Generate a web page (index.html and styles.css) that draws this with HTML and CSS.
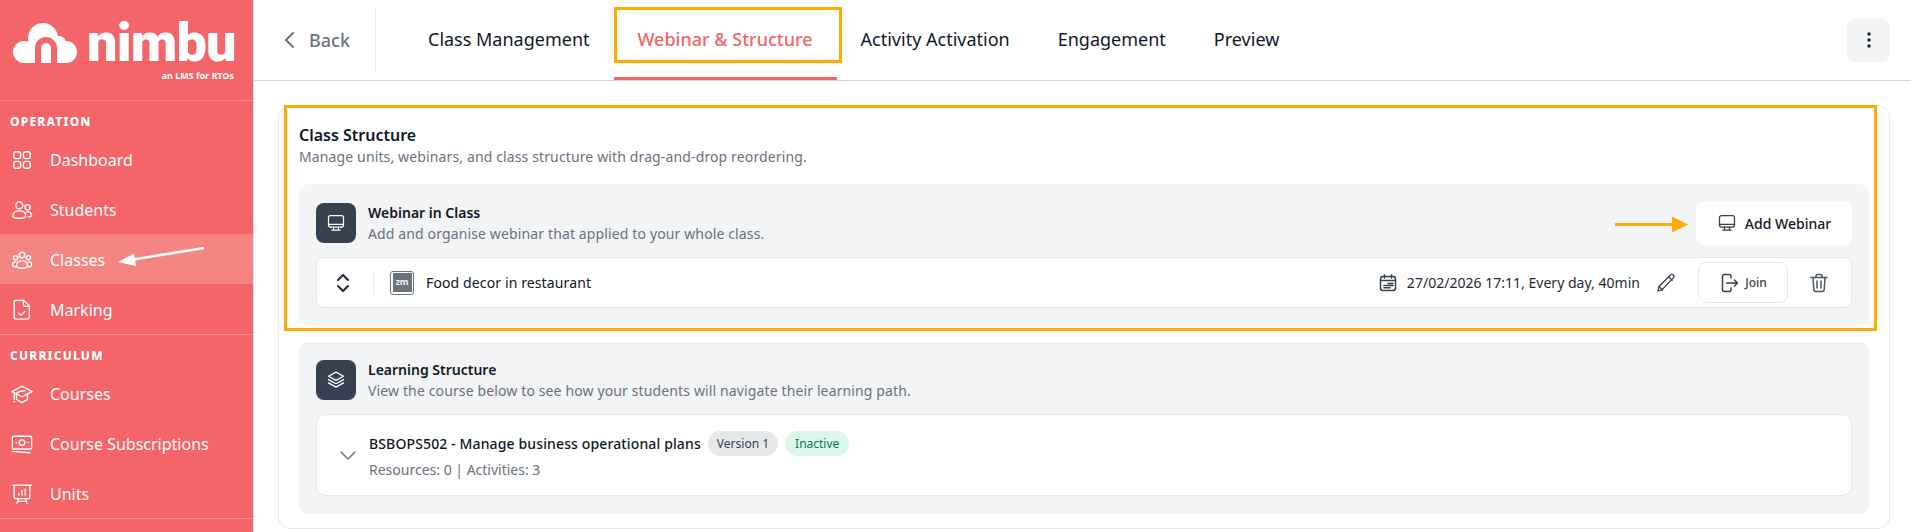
FILE: index.html
```html
<!DOCTYPE html>
<html lang="en">
<head>
<meta charset="utf-8">
<title>Class Structure</title>
<link rel="stylesheet" href="styles.css">
</head>
<body>
<div class="app">
  <aside class="sidebar">
    <div class="logo">
      <div class="logo-main">
        <svg class="cloud" width="64" height="42" viewBox="0 0 64 42"><g fill="#fff"><circle cx="11" cy="30" r="11"/><circle cx="30" cy="16" r="15"/><circle cx="53" cy="30" r="11"/><circle cx="46" cy="21" r="7"/><rect x="11" y="20" width="42" height="21"/></g><path class="cloud-arch" d="M25 42V26a8 8 0 0 1 16 0V42"/></svg>
        <span class="logo-word">nimbu</span>
      </div>
      <div class="logo-tag">an LMS for RTOs</div>
    </div>
    <section class="nav-section">
      <h2 class="nav-label">OPERATION</h2>
      <a class="nav-item"><svg class="nav-icon" viewBox="0 0 24 24"><rect x="3" y="3" width="7.500" height="7.500" rx="2.500"/><rect x="13.500" y="3" width="7.500" height="7.500" rx="2.500"/><rect x="3" y="13.500" width="7.500" height="7.500" rx="2.500"/><rect x="13.500" y="13.500" width="7.500" height="7.500" rx="2.500"/></svg>Dashboard</a>
      <a class="nav-item"><svg class="nav-icon" viewBox="0 0 24 24"><circle cx="9" cy="7" r="3.800"/><circle cx="18" cy="9" r="2.800"/><path d="M2 18.500c0-3.500 3-5.500 7-5.500s7 2 7 5.500c0 1.500-3 2.500-7 2.500s-7-1-7-2.500z"/><path d="M16.500 14c3-.5 6 1 6 3.500 0 1.200-1.500 2-3.500 2.200"/></svg>Students</a>
      <a class="nav-item active"><svg class="nav-icon" viewBox="0 0 24 24"><circle cx="12" cy="6.500" r="3"/><circle cx="5" cy="9.500" r="2.300"/><circle cx="19" cy="9.500" r="2.300"/><path d="M6 18c0-3 2.500-5 6-5s6 2 6 5c0 1.600-2.500 3-6 3s-6-1.400-6-3z"/><path d="M5.500 14C3 14 1.500 15.500 1.500 17s1.500 2.500 3.500 2.700M18.500 14c2.500 0 4 1.500 4 3s-1.500 2.500-3.500 2.700"/></svg>Classes</a>
      <a class="nav-item"><svg class="nav-icon" viewBox="0 0 24 24"><path d="M5 1.500h9l6 6V20a2 2 0 0 1-2 2H5.500a2 2 0 0 1-2-2V3a1.500 1.500 0 0 1 1.500-1.500z"/><path d="M13.500 1.500v4.500a2 2 0 0 0 2 2H20"/><path d="M8.500 15.500l2.300 2.300 4.500-4.300"/></svg>Marking</a>
    </section>
    <section class="nav-section">
      <h2 class="nav-label">CURRICULUM</h2>
      <a class="nav-item"><svg class="nav-icon" viewBox="0 0 24 24"><path d="M12 3.500L23 9.500 12 15 1 9.500z"/><path d="M6 12.500V18l6 3.500 6-3.500v-5.500"/><path d="M6 11c3-2 6-2.500 9-2.500"/><path d="M3.500 11v7"/><path d="M3 20.500h1"/></svg>Courses</a>
      <a class="nav-item"><svg class="nav-icon" viewBox="0 0 24 24"><rect x="1.500" y="3.500" width="21" height="14" rx="1.500"/><circle cx="12" cy="10.500" r="3"/><path d="M5.500 10.500h.5M18 10.500h.5"/><path d="M1.500 20l19 1.500"/></svg>Course Subscriptions</a>
      <a class="nav-item"><svg class="nav-icon" viewBox="0 0 24 24"><path d="M2 2.500h20M3.500 2.500v13a1.500 1.500 0 0 0 1.500 1.500h14a1.500 1.500 0 0 0 1.500-1.500v-13"/><path d="M8.500 13v-1.500M12 13V8.500M15.500 13V6.500"/><path d="M8 17l-1.500 5M16 17l1.500 5M7 20h10"/></svg>Units</a>
    </section>
  </aside>

  <main class="content">
    <header class="topbar">
      <a class="back"><svg class="back-icon" width="12" height="18" viewBox="0 0 12 18"><path d="M10 2L3 9l7 7"/></svg>Back</a>
      <nav class="tabs">
        <a class="tab">Class Management</a>
        <a class="tab tab-active">Webinar &amp; Structure</a>
        <a class="tab">Activity Activation</a>
        <a class="tab">Engagement</a>
        <a class="tab">Preview</a>
      </nav>
      <button class="kebab"><svg width="4" height="16" viewBox="0 0 4 16"><circle cx="2" cy="2" r="1.800"/><circle cx="2" cy="8" r="1.800"/><circle cx="2" cy="14" r="1.800"/></svg></button>
    </header>

    <div class="page">
      <div class="card">
        <h1 class="card-title">Class Structure</h1>
        <p class="card-sub">Manage units, webinars, and class structure with drag-and-drop reordering.</p>

        <section class="panel panel-webinar">
          <div class="panel-head">
            <span class="panel-icon"><svg class="stroke-icon" width="20" height="20" viewBox="0 0 24 24"><rect x="3" y="3" width="18" height="14" rx="2.500"/><path d="M3 13.500h18M9 17v3.500M15 17v3.500M7 20.500h10"/></svg></span>
            <div class="panel-text">
              <h2 class="panel-title">Webinar in Class</h2>
              <p class="panel-sub">Add and organise webinar that applied to your whole class.</p>
            </div>
            <button class="add-btn"><svg class="stroke-icon dark" width="20" height="20" viewBox="0 0 24 24"><rect x="3" y="3" width="18" height="14" rx="2.500"/><path d="M3 13.500h18M9 17v3.500M15 17v3.500M7 20.500h10"/></svg>Add Webinar</button>
          </div>
          <div class="row">
            <svg class="sort-icon" width="14" height="20" viewBox="0 0 14 20"><path d="M2 7l5-5 5 5M2 13l5 5 5-5"/></svg>
            <span class="row-divider"></span>
            <span class="zm"><span class="zm-inner">zm</span></span>
            <span class="row-name">Food decor in restaurant</span>
            <span class="row-date"><svg class="stroke-icon date-icon" width="18" height="18" viewBox="0 0 18 18"><rect x="1.500" y="2.500" width="15" height="14" rx="2.500"/><path d="M1.500 6.500h15M5.500 1v3M12.500 1v3M9 9.500h5M5 11.500h9M5 13.800h6"/></svg>27/02/2026 17:11, Every day, 40min</span>
            <svg class="stroke-icon pencil" width="20" height="20" viewBox="0 0 20 20"><path d="M2 18l1-4.500L14.500 2c1-.8 2-.8 2.800 0s.9 2 0 2.900L6 16.800z"/><path d="M12.800 3.800l3.400 3.400M3 13.500L6.500 17"/></svg>
            <button class="join"><svg class="stroke-icon dark" width="20" height="20" viewBox="0 0 20 20"><path d="M12 5V3.500A1.800 1.800 0 0 0 10.200 1.500H5.500A1.800 1.800 0 0 0 3.500 3.500v13a1.800 1.800 0 0 0 2 2h4.700a1.800 1.800 0 0 0 1.800-2V15"/><path d="M7.500 10h11M15.500 7l3 3-3 3"/></svg>Join</button>
            <svg class="stroke-icon trash" width="18" height="20" viewBox="0 0 18 20"><path d="M1 4.500h16M6 4.500V3a1.500 1.500 0 0 1 1.500-1.500h3A1.500 1.500 0 0 1 12 3v1.500M3 4.500l.8 12.300A2 2 0 0 0 5.800 18.500h6.400a2 2 0 0 0 2-1.700L15 4.500M7 8v7M11 8v7"/></svg>
          </div>
        </section>

        <section class="panel">
          <div class="panel-head">
            <span class="panel-icon"><svg class="stroke-icon" width="20" height="20" viewBox="0 0 24 24"><path d="M12 2.500L21 7.500 12 12.500 3 7.500z"/><path d="M3 11.500l9 5 9-5M3 15.500l9 5 9-5"/></svg></span>
            <div class="panel-text">
              <h2 class="panel-title">Learning Structure</h2>
              <p class="panel-sub">View the course below to see how your students will navigate their learning path.</p>
            </div>
          </div>
          <div class="course">
            <svg class="course-chevron" width="18" height="12" viewBox="0 0 18 12"><path d="M2 2l7 7 7-7"/></svg>
            <div class="course-body">
              <div class="course-line">
                <span class="course-name">BSBOPS502 - Manage business operational plans</span>
                <span class="badge badge-grey">Version 1</span>
                <span class="badge badge-green">Inactive</span>
              </div>
              <div class="course-meta">Resources: 0 | Activities: 3</div>
            </div>
          </div>
        </section>
      </div>
    </div>
  </main>
</div>

<div class="mark mark-tab"></div>
<div class="mark mark-structure"></div>
<svg class="arrow arrow-white" width="100" height="24" viewBox="0 0 100 24"><path d="M87 3L16 14.500" stroke="#fff" stroke-width="2.500" fill="none"/><path d="M1 17L17 8.500 19 21z" fill="#fff"/></svg>
<svg class="arrow arrow-orange" width="74" height="18" viewBox="0 0 74 18"><path d="M0 9.500H58" stroke="#ffab00" stroke-width="3"/><path d="M57 1.500L73 9.500 57 17.500z" fill="#ffab00"/></svg>
</body>
</html>
```
FILE: styles.css
```css
* { box-sizing: border-box; }
html, body { margin: 0; height: 100%; }
body {
  position: relative;
  overflow: hidden;
  background: #fff;
  color: #111827;
  font-family: "Noto Sans", "Liberation Sans", sans-serif;
}
h1, h2, p { margin: 0; }
button { font: inherit; color: inherit; border: 0; background: none; padding: 0; }

.app { display: flex; height: 532px; }

/* sidebar */
.sidebar {
  flex: 0 0 254px;
  background: #f36568;
  border-right: 1px solid #f6dcdc;
  color: #fff;
  overflow: hidden;
}
.logo {
  height: 101px;
  padding: 22px 19px 0 13px;
  border-bottom: 1px solid #f68d8d;
}
.logo-main { display: flex; align-items: flex-end; gap: 10px; height: 42px; }
.cloud { flex: none; }
.cloud-arch { fill: none; stroke: #f36568; stroke-width: 6; }
.logo-word {
  font-family: "Roboto", "Noto Sans", sans-serif;
  font-size: 54px;
  font-weight: 900;
  line-height: 42px;
  letter-spacing: -0.800px;
  white-space: nowrap;
}
.logo-tag {
  margin-top: 5px;
  text-align: right;
  font-size: 9px;
  font-weight: 700;
  line-height: 13px;
}
.nav-section { border-bottom: 1px solid #f68d8d; }
.nav-label {
  height: 33px;
  padding: 13px 0 0 10px;
  font-size: 12px;
  line-height: 16px;
  font-weight: 800;
  letter-spacing: 1.200px;
}
.nav-item {
  display: flex;
  align-items: center;
  gap: 17px;
  height: 50px;
  padding: 2px 0 0 11px;
  font-size: 16px;
  color: #fff;
}
.nav-item.active { background: #f58583; }
.nav-icon {
  width: 22px;
  height: 22px;
  flex: none;
  fill: none;
  stroke: #fff;
  stroke-width: 1.500;
  stroke-linecap: round;
  stroke-linejoin: round;
}

/* top bar */
.content { flex: 1; min-width: 0; display: flex; flex-direction: column; }
.topbar {
  display: flex;
  align-items: center;
  height: 81px;
  flex: none;
  padding-right: 21px;
  border-bottom: 1px solid #d5d6de;
}
.back {
  display: flex;
  align-items: center;
  gap: 14px;
  height: 64px;
  width: 122px;
  padding-left: 29px;
  border-right: 1px solid #e5e7eb;
  color: #6b7280;
  font-size: 18px;
  font-weight: 500;
}
.back-icon { fill: none; stroke: #6b7280; stroke-width: 2; stroke-linecap: round; stroke-linejoin: round; flex: none; }
.tabs { display: flex; flex: 1; margin-left: 28px; align-self: stretch; }
.tab {
  display: flex;
  align-items: center;
  padding: 0 24px;
  font-size: 18px;
  font-weight: 400;
  color: #111827;
  border-bottom: 3px solid transparent;
  white-space: nowrap;
}
.tab-active { color: #f36568; border-bottom-color: #f36568; font-weight: 500; }
.kebab {
  width: 43px;
  height: 43px;
  border-radius: 8px;
  background: #f3f4f6;
  display: flex;
  align-items: center;
  justify-content: center;
  fill: #1f2937;
}

/* card */
.page { flex: 1; padding: 24px 21px 3px 24px; min-height: 0; }
.card {
  height: 100%;
  border: 1px solid #e5e7eb;
  border-radius: 12px;
  padding: 18px 20px 0 20px;
}
.card-title { font-size: 16px; line-height: 22px; font-weight: 600; color: #111827; }
.card-sub { font-size: 14px; line-height: 20px; letter-spacing: .13px; color: #6b7280; margin-top: 1px; }
.panel {
  background: #f3f4f6;
  border-radius: 10px;
  padding: 18px 17px;
  margin-top: 16px;
}
.panel-webinar { height: 142px; margin-top: 17px; padding-top: 19px; }
.panel-head { display: flex; align-items: center; gap: 12px; height: 40px; margin-bottom: 14px; }
.panel-icon {
  width: 40px;
  height: 40px;
  flex: none;
  border-radius: 8px;
  background: #374151;
  display: flex;
  align-items: center;
  justify-content: center;
}
.stroke-icon { fill: none; stroke: #fff; stroke-width: 1.500; stroke-linecap: round; stroke-linejoin: round; }
.stroke-icon.dark, .date-icon, .pencil { stroke: #374151; }
.trash { stroke: #4b5563; stroke-width: 1.500; }
.panel-text { flex: 1; min-width: 0; }
.panel-title { font-size: 14px; line-height: 20px; font-weight: 600; color: #111827; }
.panel-sub { font-size: 14px; line-height: 20px; letter-spacing: .13px; color: #6b7280; margin-top: 1px; }
.add-btn {
  display: flex;
  align-items: center;
  justify-content: center;
  gap: 8px;
  width: 156px;
  height: 44px;
  background: #fff;
  border-radius: 8px;
  font-size: 14px;
  font-weight: 500;
  color: #111827;
}

/* webinar row */
.row {
  display: flex;
  align-items: center;
  height: 51px;
  padding: 0 23px 0 19px;
  background: #fff;
  border: 1px solid #e5e7eb;
  border-radius: 8px;
}
.sort-icon { fill: none; stroke: #1f2937; stroke-width: 2; stroke-linecap: round; stroke-linejoin: round; flex: none; }
.row-divider { width: 1px; height: 24px; background: #e5e7eb; margin: 0 16px 0 23px; flex: none; }
.zm {
  width: 24px;
  height: 24px;
  flex: none;
  border: 1.500px solid #6b7280;
  border-radius: 3px;
  padding: 1.500px;
  display: flex;
}
.zm-inner {
  flex: 1;
  background: #6b7280;
  color: #f3f4f6;
  font-size: 9px;
  line-height: 18px;
  font-weight: 700;
  text-align: center;
}
.row-name { margin-left: 12px; flex: 1; font-size: 14px; letter-spacing: .12px; color: #111827; }
.row-date { display: flex; align-items: center; gap: 10px; font-size: 14px; letter-spacing: .02px; color: #1f2937; }
.pencil { margin-left: 16px; stroke-width: 1.300; }
.join {
  display: flex;
  align-items: center;
  justify-content: center;
  gap: 6px;
  width: 90px;
  height: 41px;
  margin-left: 22px;
  border: 1px solid #e5e7eb;
  border-radius: 8px;
  font-size: 12px;
  font-weight: 500;
  color: #374151;
}
.trash { margin-left: 22px; }

/* course */
.course {
  display: flex;
  align-items: center;
  height: 82px;
  padding-left: 22px;
  background: #fff;
  border: 1px solid #e5e7eb;
  border-radius: 10px;
}
.course-chevron { fill: none; stroke: #6b7280; stroke-width: 1.500; stroke-linecap: round; stroke-linejoin: round; margin-top: 2px; flex: none; }
.course-body { margin-left: 12px; }
.course-line { display: flex; align-items: center; gap: 7px; }
.course-name { font-size: 14px; font-weight: 500; letter-spacing: .13px; color: #111827; }
.badge {
  height: 25px;
  border-radius: 13px;
  font-size: 12px;
  line-height: 25px;
}
.badge-grey { padding: 0 9px; background: #e5e7eb; color: #374151; }
.badge-green { padding: 0 10px; background: #dcf6ea; color: #047857; }
.course-meta { font-size: 14px; line-height: 20px; color: #6b7280; margin-top: 4px; }

/* annotations */
.mark { position: absolute; border: 3px solid #ffab00; }
.mark-tab { left: 614px; top: 7px; width: 228px; height: 56px; }
.mark-structure { left: 284px; top: 105px; width: 1593px; height: 226px; }
.arrow { position: absolute; }
.arrow-white { left: 117px; top: 245px; }
.arrow-orange { left: 1615px; top: 215px; }
```
